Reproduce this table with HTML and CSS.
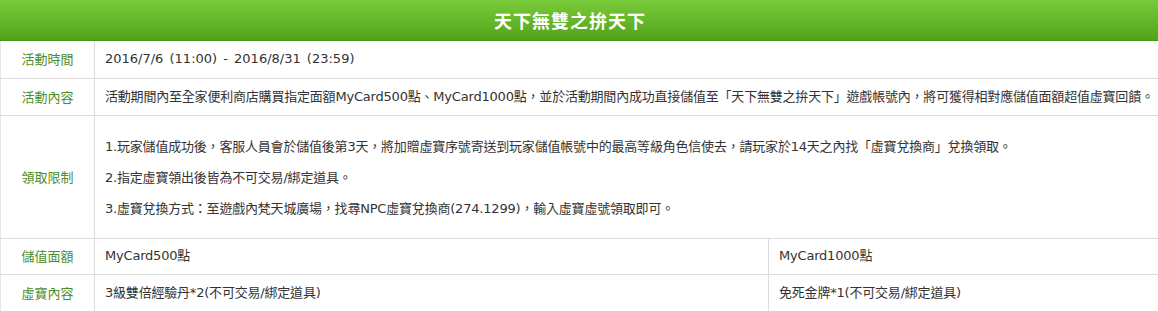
FILE: index.html
```html
<!DOCTYPE html>
<html lang="zh-Hant">
<head>
<meta charset="utf-8">
<title>天下無雙之拚天下</title>
<link rel="stylesheet" href="styles.css">
</head>
<body>
<div class="header"><h1 class="title">天下無雙之拚天下</h1></div>
<table class="info">
  <colgroup>
    <col class="c-label">
    <col class="c-a">
    <col class="c-b">
  </colgroup>
  <tbody>
    <tr class="r-37">
      <th class="label">活動時間</th>
      <td class="val date" colspan="2">2016/7/6 (11:00) - 2016/8/31 (23:59)</td>
    </tr>
    <tr class="r-37">
      <th class="label">活動內容</th>
      <td class="val nowrap" colspan="2">活動期間內至全家便利商店購買指定面額MyCard500點、MyCard1000點，並於活動期間內成功直接儲值至「天下無雙之拚天下」遊戲帳號內，將可獲得相對應儲值面額超值虛寶回饋。</td>
    </tr>
    <tr class="r-rules">
      <th class="label">領取限制</th>
      <td class="val rules" colspan="2">
        <p>1.玩家儲值成功後，客服人員會於儲值後第3天，將加贈虛寶序號寄送到玩家儲值帳號中的最高等級角色信使去，請玩家於14天之內找「虛寶兌換商」兌換領取。</p>
        <p>2.指定虛寶領出後皆為不可交易/綁定道具。</p>
        <p>3.虛寶兌換方式：至遊戲內梵天城廣場，找尋NPC虛寶兌換商(274.1299)，輸入虛寶虛號領取即可。</p>
      </td>
    </tr>
    <tr class="r-36">
      <th class="label">儲值面額</th>
      <td class="val">MyCard500點</td>
      <td class="val">MyCard1000點</td>
    </tr>
    <tr class="r-37">
      <th class="label">虛寶內容</th>
      <td class="val">3級雙倍經驗丹*2(不可交易/綁定道具)</td>
      <td class="val">免死金牌*1(不可交易/綁定道具)</td>
    </tr>
  </tbody>
</table>
</body>
</html>
```
FILE: styles.css
```css
html, body {
  margin: 0;
  padding: 0;
  background: #ffffff;
}
body {
  font-family: "DejaVu Sans", "Noto Sans CJK TC", sans-serif;
  font-size: 13px;
  color: #333333;
  overflow: hidden;
}
.header {
  height: 41px;
  background: linear-gradient(to bottom, #7acb3a 0%, #66b82a 50%, #52a11b 100%);
  border-bottom: 1px solid #4a9416;
  box-sizing: border-box;
  display: flex;
  align-items: center;
  justify-content: center;
  padding-right: 18px;
}
.title {
  margin: 0;
  color: #ffffff;
  font-family: "Noto Sans CJK TC", sans-serif;
  font-size: 18px;
  font-weight: 700;
  letter-spacing: 1px;
  line-height: 1;
}
.info {
  width: 100%;
  border-collapse: collapse;
  table-layout: fixed;
}
.c-label { width: 94px; }
.c-a { width: 674px; }
.info th, .info td {
  border: 1px solid #dddddd;
  border-top: none;
  box-sizing: border-box;
  padding: 0 10px;
  vertical-align: middle;
  line-height: 20px;
}
.r-37 > th, .r-37 > td { height: 37px; }
.r-36 > th, .r-36 > td { height: 36px; }
.r-rules > th, .r-rules > td { height: 123px; }
.info th:first-child { border-left: 1px solid #e6e6e6; }
.info td:last-child { border-right: none; }
.info th.label {
  font-weight: normal;
  text-align: center;
  color: #4f8d27;
  font-family: "Noto Sans CJK TC", sans-serif;
  padding: 0;
}
.info td.val {
  text-align: left;
  letter-spacing: -0.2px;
}
.info td.date {
  letter-spacing: 0;
  word-spacing: 2px;
}
.info td.nowrap { white-space: nowrap; }
.info td.rules {
  padding: 21px 10px 19px;
}
.rules p {
  margin: 0 0 11px;
}
.rules p:last-child { margin-bottom: 0; }
```
